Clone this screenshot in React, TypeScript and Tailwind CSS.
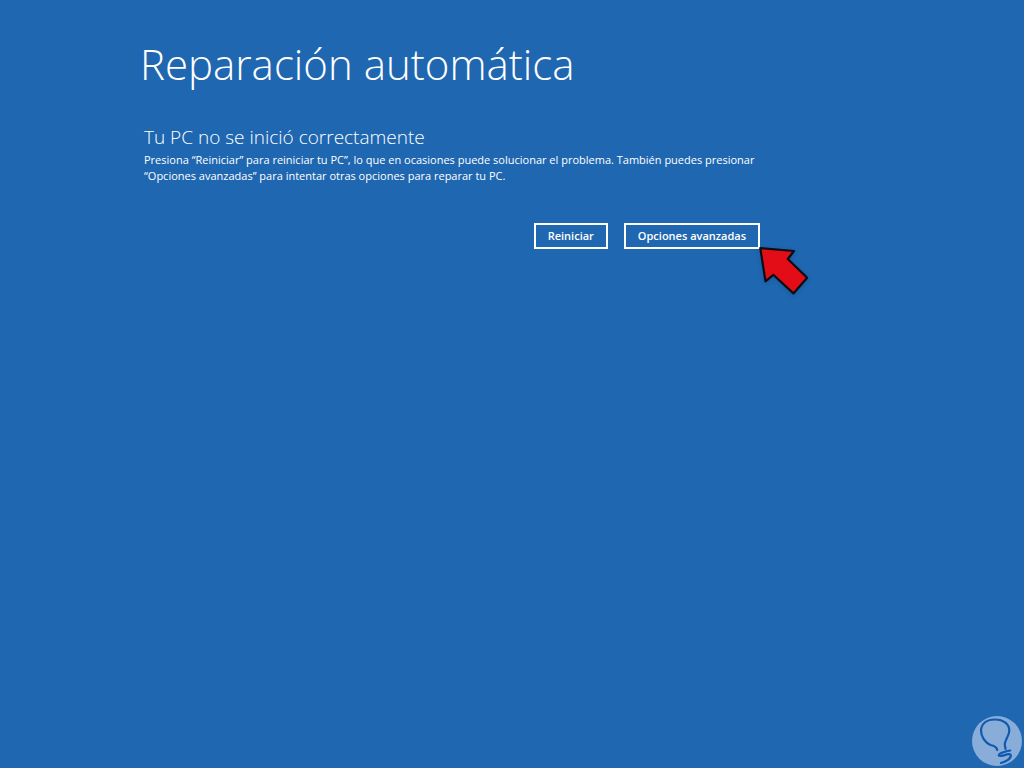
import React from 'react';

interface ActionButtonProps {
  label: string;
  children?: React.ReactNode;
}

const ActionButton: React.FC<ActionButtonProps> = ({ label, children }) => (
  <div className="relative">
    <button
      type="button"
      className="h-[26px] border-2 border-white px-3 text-[11px] leading-4 font-semibold whitespace-nowrap hover:bg-white/10"
    >
      {label}
    </button>
    {children}
  </div>
);

// Red arrow that points at the lower right corner of a button
const PointerArrow: React.FC = () => (
  <svg
    viewBox="0 0 52 50"
    className="pointer-events-none absolute top-full left-full -mt-1 -ml-1 h-[50px] w-[52px] drop-shadow-sm"
    aria-hidden="true"
  >
    <path
      d="M4.3 3.2 L38 6 L31.8 14 L51.2 32.8 L37.4 48.4 L17.3 29.8 L9.5 36.4 Z"
      fill="#e30d17"
      stroke="#0b0d14"
      strokeWidth="2.2"
      strokeLinejoin="round"
    />
  </svg>
);

const BulbLogo: React.FC = () => (
  <svg viewBox="0 0 50 50" className="fixed right-[2px] bottom-[2px] h-[50px] w-[50px]" aria-hidden="true">
    <circle cx="25" cy="25" r="25" fill="#87add8" />
    <g fill="none" stroke="#1059ae" strokeWidth="2.2" strokeLinecap="round" strokeLinejoin="round">
      <path d="M25.3 34 C24.5 31 22 29.5 18.5 29 C13.5 27 9 21 9 14.5 C9.5 7.5 15 3.5 23 3.5 C31.5 3.5 37.5 8 37.3 15 C37 21 31.5 25 33 30 L33.6 33" />
      <path d="M38.3 34.5 C34 35 26 37.5 26.8 39.5 C28 42 38 35.8 38.8 39 C39.2 43 33 46 29 47" />
    </g>
  </svg>
);

const App: React.FC = () => (
  <main className="min-h-screen bg-[#1f67b1] px-36 pt-[34px] font-['Open_Sans','Noto_Sans',sans-serif] text-white">
    <div className="max-w-[616px]">
      <h1 className="-ml-1 text-[42px] leading-[60px] font-light whitespace-nowrap">Reparación automática</h1>
      <h2 className="mt-7 text-[19px] leading-[30px] font-light">Tu PC no se inició correctamente</h2>
      <p className="text-[11px] leading-4">
        Presiona “Reiniciar” para reiniciar tu PC”, lo que en ocasiones puede solucionar el problema. También puedes presionar “Opciones avanzadas” para intentar otras opciones para reparar tu PC.
      </p>
      <div className="mt-[38px] flex justify-end gap-4">
        <ActionButton label="Reiniciar" />
        <ActionButton label="Opciones avanzadas">
          <PointerArrow />
        </ActionButton>
      </div>
    </div>
    <BulbLogo />
  </main>
);

export default App;
